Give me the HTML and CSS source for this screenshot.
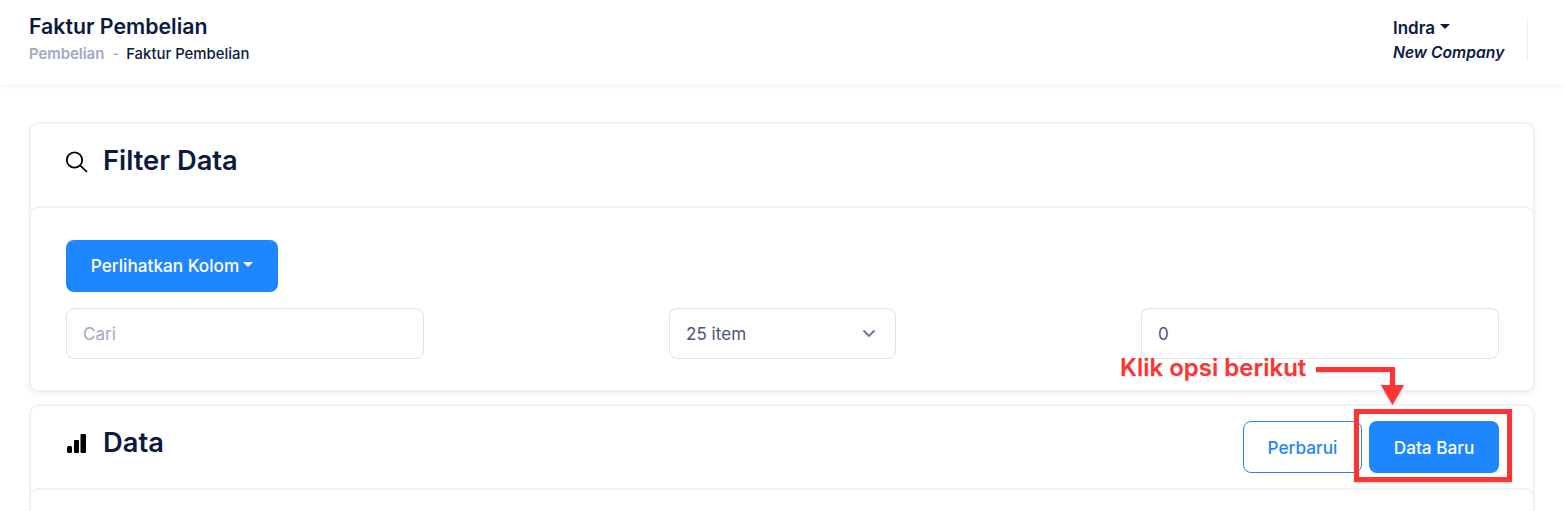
FILE: index.html
```html
<!DOCTYPE html>
<html lang="id">
<head>
<meta charset="utf-8">
<title>Faktur Pembelian</title>
<link rel="stylesheet" href="styles.css">
</head>
<body>
<header class="topbar">
  <div class="page-heading">
    <h1 class="page-title">Faktur Pembelian</h1>
    <div class="breadcrumb"><span class="crumb-muted">Pembelian</span><span class="crumb-sep">-</span><span class="crumb-current">Faktur Pembelian</span></div>
  </div>
  <div class="user-area">
    <div class="user-name">Indra<span class="caret caret-dark"></span></div>
    <div class="user-company">New Company</div>
  </div>
</header>
<main class="content">
  <section class="card card-filter">
    <div class="card-head">
      <svg class="icon" width="24" height="24" viewBox="0 0 24 24" fill="none" stroke="#000" stroke-width="1.800"><circle cx="10.500" cy="11" r="7.700"/><path d="M16.200 16.700L23 22.800"/></svg>
      <h2 class="card-title">Filter Data</h2>
    </div>
    <div class="card-body filter-body">
      <div class="row-btn"><button class="btn btn-primary btn-columns">Perlihatkan Kolom<span class="caret caret-light"></span></button></div>
      <div class="filter-row">
        <div class="field field-search">Cari</div>
        <div class="field field-select">25 item<svg class="chev" width="14" height="9" viewBox="0 0 14 9" fill="none" stroke="#6c7590" stroke-width="1.800"><path d="M1.500 1.500L7 7l5.500-5.500"/></svg></div>
        <div class="field field-number">0</div>
      </div>
    </div>
  </section>
  <section class="card card-data">
    <div class="card-head head-between">
      <div class="head-left">
        <svg class="icon" width="24" height="24" viewBox="0 0 24 24" fill="#000"><rect x="3" y="15" width="5" height="7" rx="1.500"/><rect x="10" y="9" width="5" height="13" rx="1"/><rect x="16.500" y="3" width="5.500" height="19" rx="1"/></svg>
        <h2 class="card-title">Data</h2>
      </div>
      <div class="actions">
        <button class="btn btn-outline">Perbarui</button>
        <button class="btn btn-primary btn-new">Data Baru</button>
      </div>
    </div>
    <div class="card-body data-body"></div>
  </section>
</main>
<div class="note">Klik opsi berikut</div>
<svg class="note-arrow" width="90" height="46" viewBox="0 0 90 46" fill="#ff3333"><path d="M0 3h79v5H0zM74 3h5v20h-5z"/><path d="M65 21h23L76.500 41z"/></svg>
<div class="note-box"></div>
</body>
</html>
```
FILE: styles.css
```css
* { box-sizing: border-box; }
html, body { margin: 0; height: 511px; overflow: hidden; background: #fff; }
body { font-family: Inter, "Liberation Sans", sans-serif; color: #0d1a3f; position: relative; }

.topbar { height: 84px; display: flex; justify-content: space-between; padding: 14px 35px 0 29px; background: #fff; box-shadow: 0 2px 6px rgba(60, 70, 100, .06); }
.page-title { margin: 0; font-size: 21.300px; line-height: 24px; font-weight: 600; color: #0d1a3f; }
.breadcrumb { margin-top: 8px; font-size: 14.900px; line-height: 17px; font-weight: 500; display: flex; }
.crumb-muted { color: #a1a8c0; font-weight: 600; }
.crumb-sep { color: #a1a8c0; margin: 0 7px 0 8px; }
.crumb-current { color: #0d1a3f; }

.user-area { width: 135px; height: 42px; margin-top: 4px; border-right: 1px solid #eceef3; padding-top: 1px; }
.user-name { font-size: 17px; line-height: 18px; font-weight: 600; display: flex; align-items: center; }
.user-company { margin-top: 7px; font-size: 15.700px; line-height: 17px; font-weight: 600; font-style: italic; }

.caret { display: inline-block; border-left: 5px solid transparent; border-right: 5px solid transparent; margin-left: 5px; margin-top: -4px; }
.caret-dark { border-top: 5px solid #0d1a3f; }
.caret-light { border-top: 5px solid #fff; }

.content { padding: 38px 28px 0 29px; }
.card { border: 2px solid #f1f2f5; border-bottom: 0; border-radius: 10px 10px 0 0; background: #fff; }
.card-filter { height: 270px; border-bottom: 2px solid #eff0f3; border-radius: 10px; box-shadow: 0 2px 6px rgba(60, 70, 100, .08); }
.card-data { margin-top: 12px; }
.card-head { height: 82px; padding: 0 34px 8px 33px; display: flex; align-items: center; gap: 15px; }
.head-between { justify-content: space-between; }
.head-left { display: flex; align-items: center; gap: 15px; }
.icon { flex: none; }
.card-title { margin: 0; font-size: 27.300px; line-height: 32px; font-weight: 600; color: #0d1a3f; }

.card-body { border: 2px solid #f1f2f5; border-bottom: 0; margin: 0 -2px; border-radius: 10px 10px 0 0; }
.filter-body { padding: 32px 34px 0 35px; height: 184px; border-bottom: 0; }
.data-body { height: 40px; }

.btn { font-family: inherit; font-size: 17.200px; font-weight: 500; border-radius: 8px; cursor: pointer; }
.btn-primary { height: 52px; background: #1e86ff; color: #fff; border: 0; display: inline-flex; align-items: center; justify-content: center; }
.btn-columns { width: 212px; padding-bottom: 2px; }
.btn-columns .caret { margin-left: 4px; margin-top: -2px; }
.btn-new { width: 130px; }
.btn-outline { width: 119px; height: 52px; background: #fff; color: #1e86ff; border: 1px solid #1e86ff; }
.actions { display: flex; gap: 7px; align-self: flex-start; margin-top: 15px; }

.filter-row { margin-top: 16px; display: flex; justify-content: space-between; }
.field { height: 51px; border: 1px solid #dbe0ec; border-radius: 8px; padding: 0 16px; font-size: 17.100px; line-height: 49px; color: #4a5578; }
.field-search { width: 358px; color: #a1a8c0; }
.field-select { width: 227px; display: flex; justify-content: space-between; align-items: center; padding-right: 19px; }
.field-number { width: 358px; }

.note { position: absolute; left: 1120px; top: 354px; font-size: 24px; line-height: 28px; font-weight: 600; color: #ff3333; text-shadow: 0 1px 2px rgba(0, 0, 0, .12); }
.note-arrow { position: absolute; left: 1316px; top: 364px; filter: drop-shadow(0 1px 1px rgba(0, 0, 0, .2)); }
.note-box { position: absolute; left: 1354px; top: 409px; width: 158px; height: 73px; border: 5px solid #ff3333; box-shadow: 0 1px 2px rgba(0, 0, 0, .2); }
```
